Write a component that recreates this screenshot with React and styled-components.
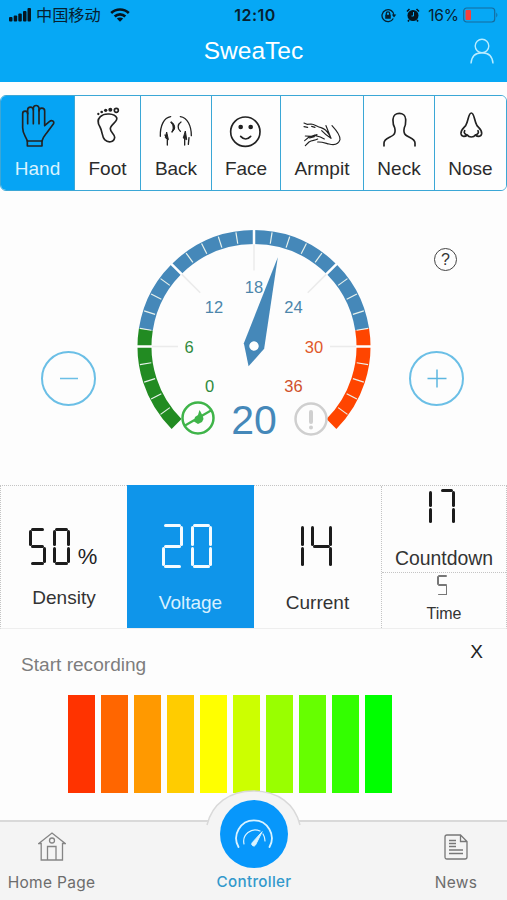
import { useState } from "react";
import styled, { createGlobalStyle } from "styled-components";

const GlobalStyle = createGlobalStyle`
  * {
    box-sizing: border-box;
  }
  body {
    margin: 0;
    background-color: #fdfdfd;
    font-family: "Liberation Sans", Arial, sans-serif;
  }
  svg {
    display: block;
    flex: none;
  }
`;

const Container = styled.div`
  height: 900px;
  display: flex;
  flex-direction: column;
  overflow: hidden;
`;

const Top = styled.header`
  height: 82px;
  background-color: #06a8f5;
`;

const StatusBar = styled.div`
  height: 30px;
  padding: 0 8px 0 9px;
  display: grid;
  grid-template-columns: 1fr auto 1fr;
  align-items: center;
  color: #06202f;
  font-family: Inter, "Noto Sans CJK SC", sans-serif;
  font-size: 15.5px;
`;

const StatusGroup = styled.div`
  display: flex;
  align-items: center;
  justify-content: ${(props) => (props.$end ? "flex-end" : "flex-start")};
`;

const Carrier = styled.span`
  margin: 0 9px 0 5px;
  font-family: "Noto Sans CJK SC", sans-serif;
  font-size: 16.2px;
  line-height: 28px;
  height: 30px;
`;

const Clock = styled.span`
  padding-left: 2px;
  font-weight: 600;
  font-size: 16px;
  letter-spacing: 0.5px;
`;

const AlarmIcon = styled.svg`
  margin-left: 9px;
`;

const Percent = styled.span`
  margin: 0 4px 0 8px;
  letter-spacing: -0.1px;
`;

const TitleBar = styled.div`
  height: 42px;
  padding: 0 13px;
  display: grid;
  grid-template-columns: 24px 1fr 24px;
  align-items: center;
`;

const Title = styled.h1`
  margin: 0;
  color: white;
  font-size: 24.5px;
  font-weight: 400;
  line-height: 42px;
  text-align: center;
`;

const Tabs = styled.nav`
  height: 96px;
  margin-top: 13px;
  display: grid;
  grid-template-columns: 74px 66px 71px 69px 83px 71px 1fr;
  border: 1.5px solid #3ba7d6;
  border-width: 1.5px 1px;
  border-radius: 6px;
  overflow: hidden;
`;

const Tab = styled.button`
  min-width: 0;
  padding: 4px 0 0;
  display: flex;
  flex-direction: column;
  align-items: center;
  border: 0;
  border-right: 1.5px solid #3ba7d6;
  background-color: ${(props) => (props.$active ? "#06a4f4" : "#fefefe")};
  color: ${(props) => (props.$active ? "#d9f3ff" : "#2b2b2b")};
  font-family: inherit;
  font-size: 19px;
  line-height: 26px;
  cursor: pointer;

  &:last-child {
    border-right: 0;
  }
`;

const TabIcon = styled.svg`
  width: 56px;
  height: 56px;
  fill: none;
  stroke: #222;
  stroke-width: 5;
  stroke-linecap: round;
  stroke-linejoin: round;
`;

const Control = styled.section`
  height: 294px;
  display: grid;
  grid-template-columns: 136px 236px 1fr;
`;

const LeftSide = styled.div`
  padding: 160px 0 0 41px;
`;

const RightSide = styled.div`
  padding: 57px 0 0 37px;
  display: flex;
  flex-direction: column;
  gap: 80px;
`;

const RoundButton = styled.button`
  width: 55px;
  height: 55px;
  padding: 0;
  display: flex;
  align-items: center;
  justify-content: center;
  border: 2px solid #6bbfe6;
  border-radius: 50%;
  background: none;
  cursor: pointer;
`;

const Help = styled.button`
  width: 23px;
  height: 23px;
  margin-left: 25px;
  padding: 0;
  border: 1.5px solid #444;
  border-radius: 50%;
  background: none;
  color: #333;
  font-family: inherit;
  font-size: 16px;
  line-height: 20px;
`;

const Dial = styled.svg`
  margin-top: 34px;
  font-family: "Liberation Sans", Arial, sans-serif;
  text-anchor: middle;
`;

const Readings = styled.section`
  height: 144px;
  display: grid;
  grid-template-columns: 126px 127px 127px 1fr;
  border: 1px dotted #c4c4c4;
  border-bottom: 1px solid #eee;
`;

const Reading = styled.div`
  padding-top: ${(props) => props.$top}px;
  display: flex;
  flex-direction: column;
  align-items: center;
  background-color: ${(props) => (props.$active ? "#0f95ea" : "transparent")};
  color: ${(props) => (props.$active ? "white" : "#222")};
  margin: ${(props) => (props.$active ? "-1px 0 0 0" : "0")};
`;

const Stack = styled.div`
  display: grid;
  grid-template-rows: 86px 1fr;
  border-left: 1px dotted #c4c4c4;

  & > :last-child {
    border-top: 1px dotted #c4c4c4;
  }
`;

const Value = styled.div`
  display: flex;
  align-items: flex-end;
  gap: ${(props) => props.$gap}px;
  transform: translateX(${(props) => props.$shift || 0}px);
`;

const Unit = styled.span`
  margin-left: 1px;
  font-size: 22px;
  line-height: 16px;
`;

const ReadingLabel = styled.span`
  margin-top: ${(props) => props.$gap}px;
  font-size: ${(props) => props.$size || 19}px;
  line-height: 24px;
  color: ${(props) => (props.$light ? "#d8f1ff" : "#333")};
`;

const Digit = styled.span`
  --t: ${(props) => props.$stroke}px;
  width: ${(props) => props.$width}px;
  height: ${(props) => props.$height}px;
  display: grid;
  grid-template-columns: var(--t) 1fr var(--t);
  grid-template-rows: var(--t) 1fr var(--t) 1fr var(--t);
`;

const Segment = styled.i`
  grid-area: ${(props) => props.$area};
  margin: ${(props) => (props.$flat ? "0 -1px" : "-1px 0")};
  border-radius: 2px;
  background-color: ${(props) => props.$color};
`;

const Recording = styled.section`
  flex: 1;
  padding-top: 10px;
`;

const RecordingHead = styled.div`
  height: 56px;
  padding: 0 24px 0 21px;
  display: flex;
  justify-content: space-between;
`;

const RecordingTitle = styled.span`
  padding-top: 14px;
  color: #7d7d7d;
  font-size: 19.1px;
  line-height: 24px;
`;

const Close = styled.span`
  color: #222;
  font-size: 19px;
  line-height: 25px;
`;

const Bars = styled.div`
  margin-left: 68px;
  display: flex;
  gap: 6px;
`;

const Bar = styled.div`
  width: 27px;
  height: 98px;
  background-color: ${(props) => props.color};
`;

const BottomNav = styled.nav`
  position: relative;
  height: 80px;
  display: grid;
  grid-template-columns: 103px 1fr 102px;
  border-top: 2px solid #d9d9d9;
  background-color: #f4f4f4;
  color: #6c6c6c;
  font-family: Inter, sans-serif;
  font-size: 15.5px;
  letter-spacing: 0.3px;
`;

const NavItem = styled.div`
  z-index: 1;
  padding-top: 10px;
  display: flex;
  flex-direction: column;
  align-items: center;
  gap: 11px;
  line-height: 22px;
  white-space: nowrap;
`;

const MainItem = styled(NavItem)`
  margin-top: -22px;
  padding-top: 0;
  gap: 3px;
  color: #3299cc;
  font-weight: 500;
  font-size: 15.2px;
`;

const Hump = styled.svg`
  position: absolute;
  top: -33px;
  left: 203px;
`;

const MainCircle = styled.div`
  width: 68px;
  height: 68px;
  display: flex;
  align-items: center;
  justify-content: center;
  border-radius: 50%;
  background-color: #0797fb;
`;

const tabs = [
  {
    name: "Hand",
    box: "28 45 168 168",
    icon: (
      <>
        <path d="M80 168C76 154 66 148 66 128V86a7.500 7.500 0 0 1 15 0V75a8.500 8.500 0 0 1 17 0V70a8.500 8.500 0 0 1 17 0V78a8.500 8.500 0 0 1 17 0V122L146 110c7-6 17-2 12 7L138 144C130 154 126 158 124 168" />
        <path d="M81 84V116M98 74V116M115 74V116M80 168H124V183H80Z" />
      </>
    ),
  },
  {
    name: "Foot",
    box: "238 45 168 168",
    icon: (
      <>
        <path d="M299 95C311 83 342 85 348 98C353 110 329 118 329 131C329 142 342 147 342 157C340 173 322 174 312 164C303 154 306 140 298 126C290 114 290 104 299 95Z" />
        <circle cx="347" cy="76" r="6" />
        <g fill="#222" stroke="none">
          <circle cx="329" cy="74" r="6" />
          <circle cx="315" cy="76" r="5" />
          <circle cx="303" cy="81" r="4" />
          <circle cx="293" cy="87" r="3.500" />
        </g>
      </>
    ),
  },
  {
    name: "Back",
    box: "444 45 168 168",
    icon: (
      <>
        <path
          strokeWidth="4"
          d="M481 154C480 122 492 98 512 95M541 95C562 98 574 122 574 152M514 111c10 6 10 20 2 30M543 111c-10 6-12 20-2 28M502 180V160M554 180V160M495 150l3 6M567 158l-2 20"
        />
        <path
          strokeWidth="3"
          fill="#222"
          d="M496 157L500 141L505 163ZM550 158L556 138L560 163ZM513 113c8 6 8 20 3 27c14-8 8-24-3-27Z"
        />
      </>
    ),
  },
  {
    name: "Face",
    box: "654 45 168 168",
    icon: (
      <>
        <circle cx="736" cy="140" r="44" />
        <path d="M722 154Q737 170 752 154" />
        <g fill="#222" stroke="none">
          <circle cx="722" cy="126" r="7" />
          <circle cx="752" cy="126" r="7" />
        </g>
      </>
    ),
  },
  {
    name: "Armpit",
    box: "123 45 168 168",
    icon: (
      <path
        strokeWidth="3.500"
        d="M153 114L162 118L174 117C186 118 192 126 204 128C214 131 222 138 228 148L234 160L219 122M153 125L164 127M176 124L186 127M237 122C250 136 262 150 261 164C256 180 240 180 228 177C216 174 206 170 194 171M157 182L168 171C178 164 184 168 194 162M155 167L168 156L184 151L202 156L214 162M157 153L176 154L192 149M206 137C214 146 222 152 234 160M170 159L184 155"
      />
    ),
  },
  {
    name: "Neck",
    box: "354 45 168 168",
    icon: (
      <path d="M393 183V174C393 160 412 158 421 150C428 144 427 136 425 128C419 120 420 112 420 103C420 79 458 79 458 103C458 112 459 120 454 128C452 136 451 144 458 150C467 158 486 160 486 174V183" />
    ),
  },
  {
    name: "Nose",
    box: "569 45 168 168",
    icon: (
      <path d="M654 84C645 84 646 106 637 122C630 130 622 134 623 146C625 157 636 155 642 150C647 158 661 158 666 150C672 155 683 157 685 146C686 134 678 130 671 122C662 106 663 84 654 84ZM634 137C630 143 636 150 642 150M674 137C678 143 672 150 666 150" />
    ),
  },
];

const barColors = [
  "#ff3300",
  "#ff6600",
  "#ff9900",
  "#ffcc00",
  "#ffff00",
  "#ccff00",
  "#99ff00",
  "#66ff00",
  "#33ff00",
  "#00ff00",
];

// a: top, b/c: right, d: bottom, e/f: left, g: middle
const areas = {
  a: "1 / 2",
  b: "2 / 3",
  c: "4 / 3",
  d: "5 / 2",
  e: "4 / 1",
  f: "2 / 1",
  g: "3 / 2",
};

const lit = {
  0: "abcdef",
  1: "bc",
  2: "abged",
  3: "abgcd",
  4: "fgbc",
  5: "afgcd",
  6: "afgecd",
  7: "abc",
  8: "abcdefg",
  9: "abcdfg",
};

const Digits = ({ value, width, height, stroke = 3, color = "#1c1c1c" }) =>
  value.split("").map((n, i) => (
    <Digit key={i} role="img" aria-label={n} $width={n === "1" ? stroke : width} $height={height} $stroke={stroke}>
      {lit[n].split("").map((s) => (
        <Segment
          key={s}
          $area={n === "1" ? areas[s].replace("/ 3", "/ 1") : areas[s]}
          $flat={"adg".includes(s)}
          $color={color}
        />
      ))}
    </Digit>
  ));

// gauge geometry, 0 points straight up
const CX = 118;
const CY = 121.5;

const point = (deg, r) => {
  const a = (deg * Math.PI) / 180;
  return [CX + r * Math.sin(a), CY - r * Math.cos(a)];
};

const arc = (from, to, r) => {
  const large = to - from > 180 ? 1 : 0;
  return `M${point(from, r)}A${r} ${r} 0 ${large} 1 ${point(to, r)}`;
};

const spoke = (deg, r1, r2) => `M${point(deg, r1)}L${point(deg, r2)}`;

const numbers = [
  { n: 0, x: 73.5, y: 160.5, color: "#2f8a3c" },
  { n: 6, x: 53, y: 121.5, color: "#2f8a3c" },
  { n: 12, x: 78, y: 82, color: "#4c86ab" },
  { n: 18, x: 118, y: 62, color: "#4c86ab" },
  { n: 24, x: 157.5, y: 82, color: "#4c86ab" },
  { n: 30, x: 178, y: 121.5, color: "#e0592b" },
  { n: 36, x: 157.5, y: 160.5, color: "#d0512b" },
];

const Gauge = ({ value }) => {
  const ticks = Array.from({ length: 29 }, (_, i) => i + 1);

  return (
    <Dial width="236" height="220" viewBox="0 0 236 220">
      <g fill="none" strokeWidth="14">
        <path stroke="#228b22" d={arc(-135, -81, 109.5)} />
        <path stroke="#4588b9" d={arc(-81, 81, 109.5)} />
        <path stroke="#ff4500" d={arc(81, 135, 109.5)} />
      </g>
      {ticks.map((i) => {
        const deg = -135 + i * 9;
        return i % 5 === 0 ? (
          <g key={i}>
            <path stroke="#fff" strokeWidth="2.500" d={spoke(deg, 102, 117)} />
            <path stroke="#ebebeb" strokeWidth="1.500" d={spoke(deg, 76, 102)} />
          </g>
        ) : (
          <path key={i} stroke="#e9f2ec" strokeWidth="1.200" d={spoke(deg, 104, 115.5)} />
        );
      })}
      {numbers.map(({ n, x, y, color }) => (
        <text key={n} x={x} y={y + 6} fill={color} fontSize="16.500">
          {n}
        </text>
      ))}
      <g transform={`translate(${CX} ${CY - 0.5}) rotate(${(value - 18) * 7.5})`}>
        <path fill="#4588b9" d="M0-92L10.500 0L0 21L-10.500 0Z" />
        <circle r="4.700" fill="#fff" />
      </g>
      <text x="118" y="209" fill="#4588b9" fontSize="41">
        {value}
      </text>
      <g transform="translate(62 193)" fill="none" stroke="#3fb449">
        <circle r="15.500" strokeWidth="2.500" />
        <path strokeWidth="2.200" d="M-13 7.500L13-7.500" />
        <path fill="#3fb449" stroke="none" d="M1.500-8C3-5 5-3 5.500 1L4 4L0 6L-4 3.500L-3-1L0-3Z" />
      </g>
      <g transform="translate(175 194)" fill="none" stroke="#cfcfcf" strokeLinecap="round">
        <circle r="15.500" strokeWidth="2.500" />
        <path strokeWidth="4" d="M0-7V3M0 8.500V8.600" />
      </g>
    </Dial>
  );
};

const App = () => {
  const [active, setActive] = useState("Hand");
  const [voltage, setVoltage] = useState(20);

  return (
    <Container>
      <GlobalStyle />
      <Top>
        <StatusBar>
          <StatusGroup>
            <svg width="22" height="14" viewBox="0 0 22 14" fill="#06151f">
              <rect x="0" y="9" width="3.500" height="4.500" rx="1" />
              <rect x="4.700" y="7.500" width="3.500" height="6" rx="1" />
              <rect x="9.300" y="5.500" width="3.500" height="8" rx="1" />
              <rect x="14" y="3" width="3.500" height="10.500" rx="1" />
              <rect x="18.500" y="0" width="3.500" height="13.500" rx="1" />
            </svg>
            <Carrier>中国移动</Carrier>
            <svg width="20" height="14" viewBox="0 0 20 14" fill="none" stroke="#06151f" strokeWidth="2.600">
              <path d="M1.200 5C6 .3 14 .3 18.800 5M4.700 8.500C7.600 5.600 12.400 5.600 15.300 8.500" />
              <path fill="#06151f" stroke="none" d="M10 13.800L6.800 10.600C8.500 9 11.500 9 13.200 10.600Z" />
            </svg>
          </StatusGroup>
          <Clock>12:10</Clock>
          <StatusGroup $end>
            <svg width="16" height="15" viewBox="0 0 16 15" fill="none" stroke="#06202f" strokeWidth="1.300">
              <path d="M12.300 10.500A6 6 0 1 1 13 7.500" />
              <path d="M5.300 7V5.500a1.700 1.700 0 0 1 3.400 0V7" />
              <path fill="#06202f" stroke="none" d="M4.200 6.700H9.800V10.800H4.200ZM10.800 6.500H15.300L13 9.500Z" />
            </svg>
            <AlarmIcon width="14" height="14" viewBox="0 0 14 14">
              <circle cx="7" cy="7.500" r="5.500" fill="#06151f" />
              <path
                d="M1 3.500L3.500 1M13 3.500L10.500 1M3 12L2 13.500M11 12L12 13.500"
                stroke="#06151f"
                strokeWidth="1.600"
              />
              <path d="M7.500 4V8H5.500" fill="none" stroke="#06a8f5" strokeWidth="1" />
            </AlarmIcon>
            <Percent>16%</Percent>
            <svg width="36" height="16" viewBox="0 0 36 16">
              <rect x=".7" y="1" width="31" height="14" rx="3" fill="none" stroke="#176b9c" strokeWidth="1.200" />
              <rect x="2.500" y="3" width="5.500" height="10" rx="1" fill="#f6403c" />
              <path d="M33.300 5.500Q35.500 8 33.300 10.500Z" fill="#176b9c" />
            </svg>
          </StatusGroup>
        </StatusBar>
        <TitleBar>
          <span />
          <Title>SweaTec</Title>
          <svg width="24" height="26" viewBox="0 0 24 26" fill="none" stroke="#b9ecff" strokeWidth="1.400">
            <circle cx="12" cy="8" r="6.800" />
            <path d="M1 25.500C1.500 18 6 14.800 12 14.800S22.500 18 23 25.500" />
          </svg>
        </TitleBar>
      </Top>

      <Tabs>
        {tabs.map((tab) => (
          <Tab key={tab.name} $active={active === tab.name} onClick={() => setActive(tab.name)}>
            <TabIcon viewBox={tab.box}>{tab.icon}</TabIcon>
            {tab.name}
          </Tab>
        ))}
      </Tabs>

      <Control>
        <LeftSide>
          <RoundButton onClick={() => setVoltage(voltage > 0 ? voltage - 1 : 0)}>
            <svg width="20" height="20" viewBox="0 0 20 20" stroke="#6bbfe6" strokeWidth="1.500">
              <path d="M1 9.500H19" />
            </svg>
          </RoundButton>
        </LeftSide>
        <Gauge value={voltage} />
        <RightSide>
          <Help>?</Help>
          <RoundButton onClick={() => setVoltage(voltage < 36 ? voltage + 1 : 36)}>
            <svg width="20" height="20" viewBox="0 0 20 20" stroke="#5cb6e0" strokeWidth="1.500">
              <path d="M.5 9.500H19.500M10 .5V18.500" />
            </svg>
          </RoundButton>
        </RightSide>
      </Control>

      <Readings>
        <Reading $top={42}>
          <Value $gap={7} $shift={-1}>
            <Digits value="50" width={17} height={37} />
            <Unit>%</Unit>
          </Value>
          <ReadingLabel $gap={21}>Density</ReadingLabel>
        </Reading>
        <Reading $active $top={39}>
          <Value $gap={8} $shift={-4}>
            <Digits value={String(voltage)} width={21} height={44} color="#f4fbff" />
          </Value>
          <ReadingLabel $gap={23} $light>
            Voltage
          </ReadingLabel>
        </Reading>
        <Reading $top={38}>
          <Value $gap={7} $shift={-1}>
            <Digits value="14" width={21} height={44} />
          </Value>
          <ReadingLabel $gap={23}>Current</ReadingLabel>
        </Reading>
        <Stack>
          <Reading $top={3}>
            <Value $gap={7} $shift={-2}>
              <Digits value="17" width={16} height={36} />
            </Value>
            <ReadingLabel $gap={21} $size={19.4}>
              Countdown
            </ReadingLabel>
          </Reading>
          <Reading $top={2}>
            <Value $gap={4} $shift={-2}>
              <Digits value="5" width={10} height={20} stroke={1.5} color="#777" />
            </Value>
            <ReadingLabel $gap={6.5} $size={16}>
              Time
            </ReadingLabel>
          </Reading>
        </Stack>
      </Readings>

      <Recording>
        <RecordingHead>
          <RecordingTitle>Start recording</RecordingTitle>
          <Close>X</Close>
        </RecordingHead>
        <Bars>
          {barColors.map((color) => (
            <Bar key={color} color={color} />
          ))}
        </Bars>
      </Recording>

      <BottomNav>
        <Hump width="101" height="40" viewBox="0 0 101 40">
          <path d="M3.500 37C9 15 26 2 50.500 2S92 15 97.500 37V40H3.500Z" fill="#f4f4f4" />
          <path d="M4 36C9 15 26 2 50.500 2S92 15 97 36" fill="none" stroke="#d9d9d9" strokeWidth="1.500" />
        </Hump>
        <NavItem>
          <svg width="28" height="29" viewBox="0 0 28 29" fill="none" stroke="#858585" strokeWidth="1.300">
            <path d="M.8 11.500L14 1L27.200 11.500H24.500V28H3.200V11.500ZM9.500 28V14.500H18V28" />
            <circle cx="14" cy="8.500" r="2.500" />
          </svg>
          Home Page
        </NavItem>
        <MainItem>
          <MainCircle>
            <svg width="40" height="34" viewBox="0 -3 40 34" fill="none" stroke="#d9f3ff" strokeLinecap="round">
              <path strokeWidth="1.800" d="M4.500 27A17.800 17.800 0 1 1 35.500 27" />
              <path strokeWidth="1.200" d="M10 24A11.500 11.500 0 0 1 26 11M29 14Q31 17 31 21" />
              <path fill="#d9f3ff" strokeWidth="1" d="M28 12L21.500 25A2 2 0 0 1 18 23Z" />
            </svg>
          </MainCircle>
          Controller
        </MainItem>
        <NavItem>
          <svg width="24" height="29" viewBox="0 0 24 29" fill="none" stroke="#777" strokeWidth="1.300">
            <path d="M3 3H16.500L23 9.500V25Q23 27 21 27H3Q1 27 1 25V5Q1 3 3 3ZM16.500 3V9.500H23" />
            <path d="M5 8.500H12M5 11.500H12M5 14.500H12M5 18H19M5 21.500H19" />
          </svg>
          News
        </NavItem>
      </BottomNav>
    </Container>
  );
};

export default App;
